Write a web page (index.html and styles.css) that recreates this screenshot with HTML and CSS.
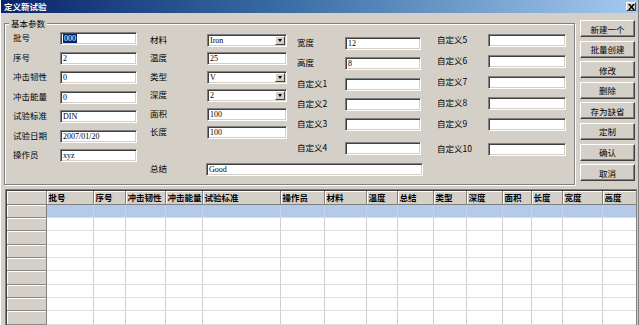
FILE: index.html
```html
<!DOCTYPE html>
<html>
<head>
<meta charset="utf-8">
<title>定义新试验</title>
<link rel="stylesheet" href="styles.css">
</head>
<body>
<div class="window">
  <div class="titlebar">
    <span class="title">定义新试验</span>
    <span class="close"><svg width="7" height="6" viewBox="0 0 7 6"><path d="M0 0h2l1.5 2L5 0h2L4.5 3 7 6H5L3.5 4 2 6H0l2.5-3z" fill="#000"/></svg></span>
  </div>
  <div class="top">
    <div class="group">
      <div class="legend">基本参数</div>
      <div class="cols">
        <div class="col col1">
          <div class="field"><span class="lbl">批号</span><div class="input"><span class="sel">000</span></div></div>
          <div class="field"><span class="lbl">序号</span><div class="input">2</div></div>
          <div class="field"><span class="lbl">冲击韧性</span><div class="input">0</div></div>
          <div class="field"><span class="lbl">冲击能量</span><div class="input">0</div></div>
          <div class="field"><span class="lbl">试验标准</span><div class="input">DIN</div></div>
          <div class="field"><span class="lbl">试验日期</span><div class="input">2007/01/20</div></div>
          <div class="field"><span class="lbl">操作员</span><div class="input">xyz</div></div>
        </div>
        <div class="col col2">
          <div class="field"><span class="lbl">材料</span><div class="input combo">Iron<span class="drop"></span></div></div>
          <div class="field"><span class="lbl">温度</span><div class="input">25</div></div>
          <div class="field"><span class="lbl">类型</span><div class="input combo">V<span class="drop"></span></div></div>
          <div class="field"><span class="lbl">深度</span><div class="input combo">2<span class="drop"></span></div></div>
          <div class="field"><span class="lbl">面积</span><div class="input">100</div></div>
          <div class="field"><span class="lbl">长度</span><div class="input">100</div></div>
        </div>
        <div class="col col3">
          <div class="field"><span class="lbl">宽度</span><div class="input">12</div></div>
          <div class="field"><span class="lbl">高度</span><div class="input">8</div></div>
          <div class="field"><span class="lbl">自定义1</span><div class="input"></div></div>
          <div class="field"><span class="lbl">自定义2</span><div class="input"></div></div>
          <div class="field"><span class="lbl">自定义3</span><div class="input"></div></div>
          <div class="field spaced"><span class="lbl">自定义4</span><div class="input"></div></div>
        </div>
        <div class="col col4">
          <div class="field"><span class="lbl">自定义5</span><div class="input"></div></div>
          <div class="field"><span class="lbl">自定义6</span><div class="input"></div></div>
          <div class="field"><span class="lbl">自定义7</span><div class="input"></div></div>
          <div class="field"><span class="lbl">自定义8</span><div class="input"></div></div>
          <div class="field"><span class="lbl">自定义9</span><div class="input"></div></div>
          <div class="field spaced"><span class="lbl">自定义10</span><div class="input"></div></div>
        </div>
      </div>
      <div class="field summary"><span class="lbl">总结</span><div class="input">Good</div></div>
    </div>
    <div class="buttons">
      <div class="btn">新建一个</div>
      <div class="btn">批量创建</div>
      <div class="btn">修改</div>
      <div class="btn">删除</div>
      <div class="btn">存为缺省</div>
      <div class="btn">定制</div>
      <div class="btn">确认</div>
      <div class="btn">取消</div>
    </div>
  </div>
  <div class="grid">
    <table>
      <colgroup>
        <col class="c-rh"><col class="c1"><col class="c2"><col class="c3"><col class="c4"><col class="c5"><col class="c6"><col class="c7"><col class="c8"><col class="c9"><col class="c10"><col class="c11"><col class="c12"><col class="c13"><col class="c14"><col class="c15">
      </colgroup>
      <thead>
        <tr><th></th><th>批号</th><th>序号</th><th>冲击韧性</th><th>冲击能量</th><th>试验标准</th><th>操作员</th><th>材料</th><th>温度</th><th>总结</th><th>类型</th><th>深度</th><th>面积</th><th>长度</th><th>宽度</th><th>高度</th></tr>
      </thead>
      <tbody>
        <tr class="selected"><th></th><td></td><td></td><td></td><td></td><td></td><td></td><td></td><td></td><td></td><td></td><td></td><td></td><td></td><td></td><td></td></tr>
        <tr><th></th><td></td><td></td><td></td><td></td><td></td><td></td><td></td><td></td><td></td><td></td><td></td><td></td><td></td><td></td><td></td></tr>
        <tr><th></th><td></td><td></td><td></td><td></td><td></td><td></td><td></td><td></td><td></td><td></td><td></td><td></td><td></td><td></td><td></td></tr>
        <tr><th></th><td></td><td></td><td></td><td></td><td></td><td></td><td></td><td></td><td></td><td></td><td></td><td></td><td></td><td></td><td></td></tr>
        <tr><th></th><td></td><td></td><td></td><td></td><td></td><td></td><td></td><td></td><td></td><td></td><td></td><td></td><td></td><td></td><td></td></tr>
        <tr><th></th><td></td><td></td><td></td><td></td><td></td><td></td><td></td><td></td><td></td><td></td><td></td><td></td><td></td><td></td><td></td></tr>
        <tr><th></th><td></td><td></td><td></td><td></td><td></td><td></td><td></td><td></td><td></td><td></td><td></td><td></td><td></td><td></td><td></td></tr>
        <tr><th></th><td></td><td></td><td></td><td></td><td></td><td></td><td></td><td></td><td></td><td></td><td></td><td></td><td></td><td></td><td></td></tr>
        <tr><th></th><td></td><td></td><td></td><td></td><td></td><td></td><td></td><td></td><td></td><td></td><td></td><td></td><td></td><td></td><td></td></tr>
        <tr><th></th><td></td><td></td><td></td><td></td><td></td><td></td><td></td><td></td><td></td><td></td><td></td><td></td><td></td><td></td><td></td></tr>
      </tbody>
    </table>
  </div>
</div>
</body>
</html>
```

FILE: styles.css
```css
* { box-sizing: border-box; }
html, body { margin: 0; padding: 0; }
body {
  background: #d4d0c8;
  font-family: "Noto Sans CJK SC", "Liberation Sans", sans-serif;
  font-size: 8.5px;
  color: #000;
  width: 639px;
  height: 325px;
  overflow: hidden;
}
.window {
  width: 639px;
  height: 325px;
  overflow: hidden;
  border-left: 1px solid #fff;
  border-right: 1px solid #808080;
}
.titlebar {
  height: 13px;
  background: linear-gradient(to right, #0a246a 0%, #3a6ea5 45%, #a6caf0 100%);
  display: flex;
  align-items: center;
  justify-content: space-between;
  padding: 0 2px 0 3px;
}
.title {
  color: #fff;
  font-weight: bold;
  font-size: 8.5px;
  line-height: 13px;
}
.close {
  width: 10px;
  height: 9px;
  background: #d4d0c8;
  border-top: 1px solid #fff;
  border-left: 1px solid #fff;
  border-right: 1px solid #404040;
  border-bottom: 1px solid #404040;
  display: flex;
  align-items: center;
  justify-content: center;
}
.top {
  display: flex;
  align-items: flex-start;
}
.group {
  position: relative;
  margin: 10px 0 0 3px;
  width: 571px;
  height: 162px;
  border: 1px solid #808080;
  box-shadow: inset 1px 1px 0 #fff, 1px 1px 0 #fff;
  padding: 8px 0 0 8px;
}
.legend {
  position: absolute;
  top: -6px;
  left: 4px;
  padding: 0 2px;
  background: #d4d0c8;
  line-height: 11px;
  font-size: 8.5px;
}
.cols {
  display: flex;
  align-items: flex-start;
}
.col {
  display: flex;
  flex-direction: column;
}
.col1 { gap: 6.5px; }
.col1 .lbl { width: 47px; }
.col1 .input { width: 77px; }
.col2 { gap: 5.4px; margin: 2px 0 0 13px; }
.col2 .lbl { width: 57px; }
.col2 .input { width: 80px; }
.col3 { gap: 7.25px; margin: 5px 0 0 10px; }
.col3 .lbl { width: 48px; }
.col3 .input { width: 76px; }
.col4 { gap: 8px; margin: 2px 0 0 16px; }
.col4 .lbl { width: 51px; }
.col4 .input { width: 78px; }
.spaced { margin-top: 3.5px; }
.field {
  display: flex;
  align-items: center;
  height: 13px;
}
.lbl {
  font-size: 8.5px;
  line-height: 11px;
  white-space: nowrap;
  margin-top: -2px;
}
.input {
  position: relative;
  height: 13px;
  background: #fff;
  border-top: 1px solid #808080;
  border-left: 1px solid #808080;
  border-right: 1px solid #fff;
  border-bottom: 1px solid #fff;
  box-shadow: inset 1px 1px 0 #404040, inset -1px -1px 0 #d4d0c8;
  font-family: "Liberation Serif", serif;
  font-size: 8px;
  line-height: 11px;
  padding-left: 2px;
  white-space: nowrap;
  overflow: hidden;
}
.sel {
  background: #0a246a;
  color: #fff;
  padding: 0 1px;
}
.combo { padding-right: 12px; }
.drop {
  position: absolute;
  right: 1px;
  top: 1px;
  width: 10px;
  height: 9px;
  background: #d4d0c8;
  border-top: 1px solid #fff;
  border-left: 1px solid #fff;
  border-right: 1px solid #404040;
  border-bottom: 1px solid #404040;
}
.drop::after {
  content: "";
  position: absolute;
  left: 2px;
  top: 2px;
  border-left: 2.5px solid transparent;
  border-right: 2.5px solid transparent;
  border-top: 3px solid #000;
}
.summary {
  margin: 1px 0 0 137px;
}
.summary .lbl { width: 56px; }
.summary .input { width: 217px; }
.buttons {
  display: flex;
  flex-direction: column;
  gap: 3.6px;
  margin: 7px 0 0 5px;
  width: 55px;
}
.btn {
  height: 17px;
  background: #d4d0c8;
  border-top: 1px solid #fff;
  border-left: 1px solid #fff;
  border-right: 1px solid #404040;
  border-bottom: 1px solid #404040;
  box-shadow: inset -1px -1px 0 #808080;
  display: flex;
  align-items: center;
  justify-content: center;
  font-size: 8.5px;
}
.grid {
  margin: 4px 0 0 4px;
  width: 632px;
  height: 140px;
  border-top: 1px solid #808080;
  border-left: 1px solid #808080;
  border-right: 1px solid #808080;
  box-shadow: inset 1px 1px 0 #404040;
  padding: 1px 0 0 1px;
  background: #fff;
  overflow: hidden;
}
table {
  border-collapse: collapse;
  table-layout: fixed;
  width: 630px;
}
.c-rh { width: 39px; }
.c1 { width: 47px; }
.c2 { width: 32px; }
.c3 { width: 40px; }
.c4 { width: 37px; }
.c5 { width: 78px; }
.c6 { width: 44px; }
.c7 { width: 42px; }
.c8 { width: 31px; }
.c9 { width: 36px; }
.c10 { width: 33px; }
.c11 { width: 36px; }
.c12 { width: 29px; }
.c13 { width: 31px; }
.c14 { width: 40px; }
.c15 { width: 35px; }
thead th {
  height: 13px;
  background: #d4d0c8;
  border-right: 1px solid #808080;
  border-bottom: 1px solid #808080;
  box-shadow: inset 1px 1px 0 #fff;
  font-size: 8.5px;
  font-weight: bold;
  text-align: left;
  padding: 0 0 0 2px;
  line-height: 11px;
  white-space: nowrap;
  overflow: hidden;
}
tbody tr { height: 13.35px; }
tbody th {
  background: #d4d0c8;
  border-right: 1px solid #808080;
  border-bottom: 1px solid #8a8a8a;
  box-shadow: inset 1px 1px 0 #fff;
  padding: 0;
}
tbody td {
  border-right: 1px solid #cfcfcf;
  border-bottom: 1px solid #dedede;
  padding: 0;
}
tbody tr.selected td {
  background: #b5c9e8;
  border-right-color: #c4d3ea;
}
```
